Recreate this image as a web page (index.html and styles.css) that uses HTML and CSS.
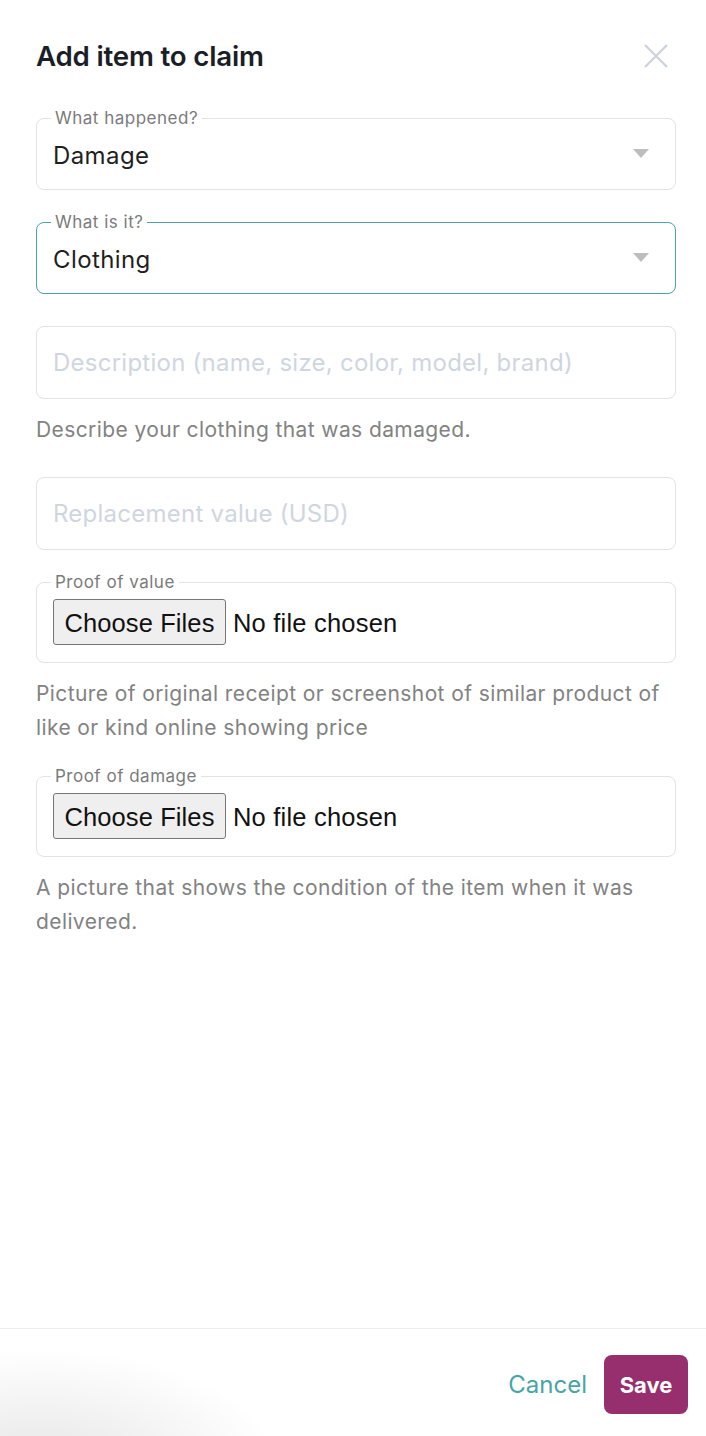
FILE: index.html
```html
<!DOCTYPE html>
<html lang="en">
<head>
<meta charset="utf-8">
<title>Add item to claim</title>
<link rel="stylesheet" href="styles.css">
</head>
<body>
<div class="modal">
  <div class="content">
    <header class="header">
      <h1 class="title">Add item to claim</h1>
      <button class="close" aria-label="Close">
        <svg width="24" height="24" viewBox="0 0 24 24"><path d="M1 1L23 23M23 1L1 23" stroke="#cbd3de" stroke-width="2.2" fill="none"/></svg>
      </button>
    </header>

    <fieldset class="field field-select">
      <legend class="legend">What happened?</legend>
      <div class="select-row"><span class="value">Damage</span><span class="arrow"></span></div>
    </fieldset>

    <fieldset class="field field-select field-focus">
      <legend class="legend">What is it?</legend>
      <div class="select-row"><span class="value">Clothing</span><span class="arrow"></span></div>
    </fieldset>

    <div class="box box-desc"><input class="text-input" type="text" placeholder="Description (name, size, color, model, brand)"></div>
    <p class="help help-one">Describe your clothing that was damaged.</p>

    <div class="box box-value"><input class="text-input" type="text" placeholder="Replacement value (USD)"></div>

    <fieldset class="field field-file field-file-first">
      <legend class="legend">Proof of value</legend>
      <div class="file-row"><span class="file-btn">Choose Files</span><span class="file-status">No file chosen</span></div>
    </fieldset>
    <p class="help">Picture of original receipt or screenshot of similar product of like or kind online showing price</p>

    <fieldset class="field field-file field-file-second">
      <legend class="legend">Proof of damage</legend>
      <div class="file-row"><span class="file-btn">Choose Files</span><span class="file-status">No file chosen</span></div>
    </fieldset>
    <p class="help">A picture that shows the condition of the item when it was delivered.</p>
  </div>

  <footer class="footer">
    <button class="btn-cancel">Cancel</button>
    <button class="btn-save">Save</button>
  </footer>
</div>
</body>
</html>
```

FILE: styles.css
```css
* { box-sizing: border-box; }
html, body { margin: 0; padding: 0; background: #fff; }
body { font-family: Inter, "Noto Sans", sans-serif; color: #222; }

.modal {
  height: 1436px;
  display: flex;
  flex-direction: column;
}
.content {
  flex: 1;
  padding: 36px 30px 0 36px;
  display: flex;
  flex-direction: column;
}

.header {
  height: 40px;
  display: flex;
  align-items: center;
  justify-content: space-between;
}
.title {
  margin: 0;
  font-size: 27.7px;
  line-height: 40px;
  font-weight: 600;
  color: #1a1e27;
  letter-spacing: -0.2px;
}
.close {
  border: 0;
  background: none;
  padding: 0;
  margin-right: 8px;
  width: 24px;
  height: 24px;
  display: flex;
}

.field {
  margin: 0;
  border: 1px solid #e3e3e3;
  border-radius: 8px;
  padding: 0 26px 0 16px;
  min-width: 0;
}
.field-focus { border-color: #4aa3a4; }
.legend {
  font-size: 17px;
  line-height: 18px;
  letter-spacing: 0.5px;
  color: #7b7b7b;
  padding: 0 4px;
  margin-left: -2px;
}
.field-select { margin-top: 33px; }
.field-focus { margin-top: 23px; }
.select-row {
  height: 54px;
  margin-bottom: 8px;
  padding-top: 3px;
  display: flex;
  align-items: center;
  justify-content: space-between;
}
.value {
  font-size: 24px;
  line-height: 30px;
  letter-spacing: 0.4px;
  color: #1f1f1f;
}
.arrow {
  width: 0;
  height: 0;
  border-left: 8px solid transparent;
  border-right: 8px solid transparent;
  border-top: 9px solid #bdbdbd;
  margin-top: -4px;
}

.box {
  height: 73px;
  border: 1px solid #e3e3e3;
  border-radius: 8px;
  display: flex;
  align-items: center;
  padding: 0 16px;
}
.box-desc { margin-top: 32px; }
.box-value { margin-top: 30px; }
.text-input {
  border: 0;
  outline: none;
  width: 100%;
  padding: 0;
  font-family: Inter, "Noto Sans", sans-serif;
  font-size: 24px;
  line-height: 30px;
  letter-spacing: 0.25px;
  color: #222;
  background: transparent;
}
.text-input::placeholder { color: #cfd6e0; }

.help {
  margin: 14px 0 0;
  font-size: 21px;
  line-height: 34px;
  letter-spacing: 0.4px;
  color: #828282;
}

.field-file-first { margin-top: 23px; }
.field-file-second { margin-top: 22px; }
.file-row {
  display: flex;
  align-items: center;
  padding-top: 8px;
  padding-bottom: 17px;
}
.file-btn {
  font-family: "Liberation Sans", Arial, sans-serif;
  font-size: 25.5px;
  line-height: 28px;
  letter-spacing: 0.1px;
  color: #111;
  background: #efefef;
  border: 1px solid #767676;
  border-radius: 3px;
  height: 46px;
  width: 173px;
  padding-top: 2px;
  display: flex;
  align-items: center;
  justify-content: center;
}
.file-status {
  font-family: "Liberation Sans", Arial, sans-serif;
  font-size: 25.5px;
  line-height: 28px;
  letter-spacing: 0.2px;
  color: #111;
  margin-left: 7px;
  padding-top: 2px;
}

.footer {
  border-top: 1px solid #eceef1;
  padding: 26px 18px 22px 0;
  display: flex;
  justify-content: flex-end;
  align-items: center;
  gap: 17px;
  background: radial-gradient(ellipse 240px 120px at 40px 140px, rgba(0,0,0,0.1), rgba(0,0,0,0) 100%) #fff;
}
.btn-cancel {
  border: 0;
  background: none;
  padding: 0;
  font-family: Inter, "Noto Sans", sans-serif;
  font-size: 24px;
  line-height: 30px;
  color: #47a5a5;
}
.btn-save {
  border: 0;
  width: 84px;
  height: 59px;
  border-radius: 8px;
  background: #972f6f;
  color: #fff;
  font-family: Inter, "Noto Sans", sans-serif;
  font-size: 22px;
  font-weight: 700;
}
```
